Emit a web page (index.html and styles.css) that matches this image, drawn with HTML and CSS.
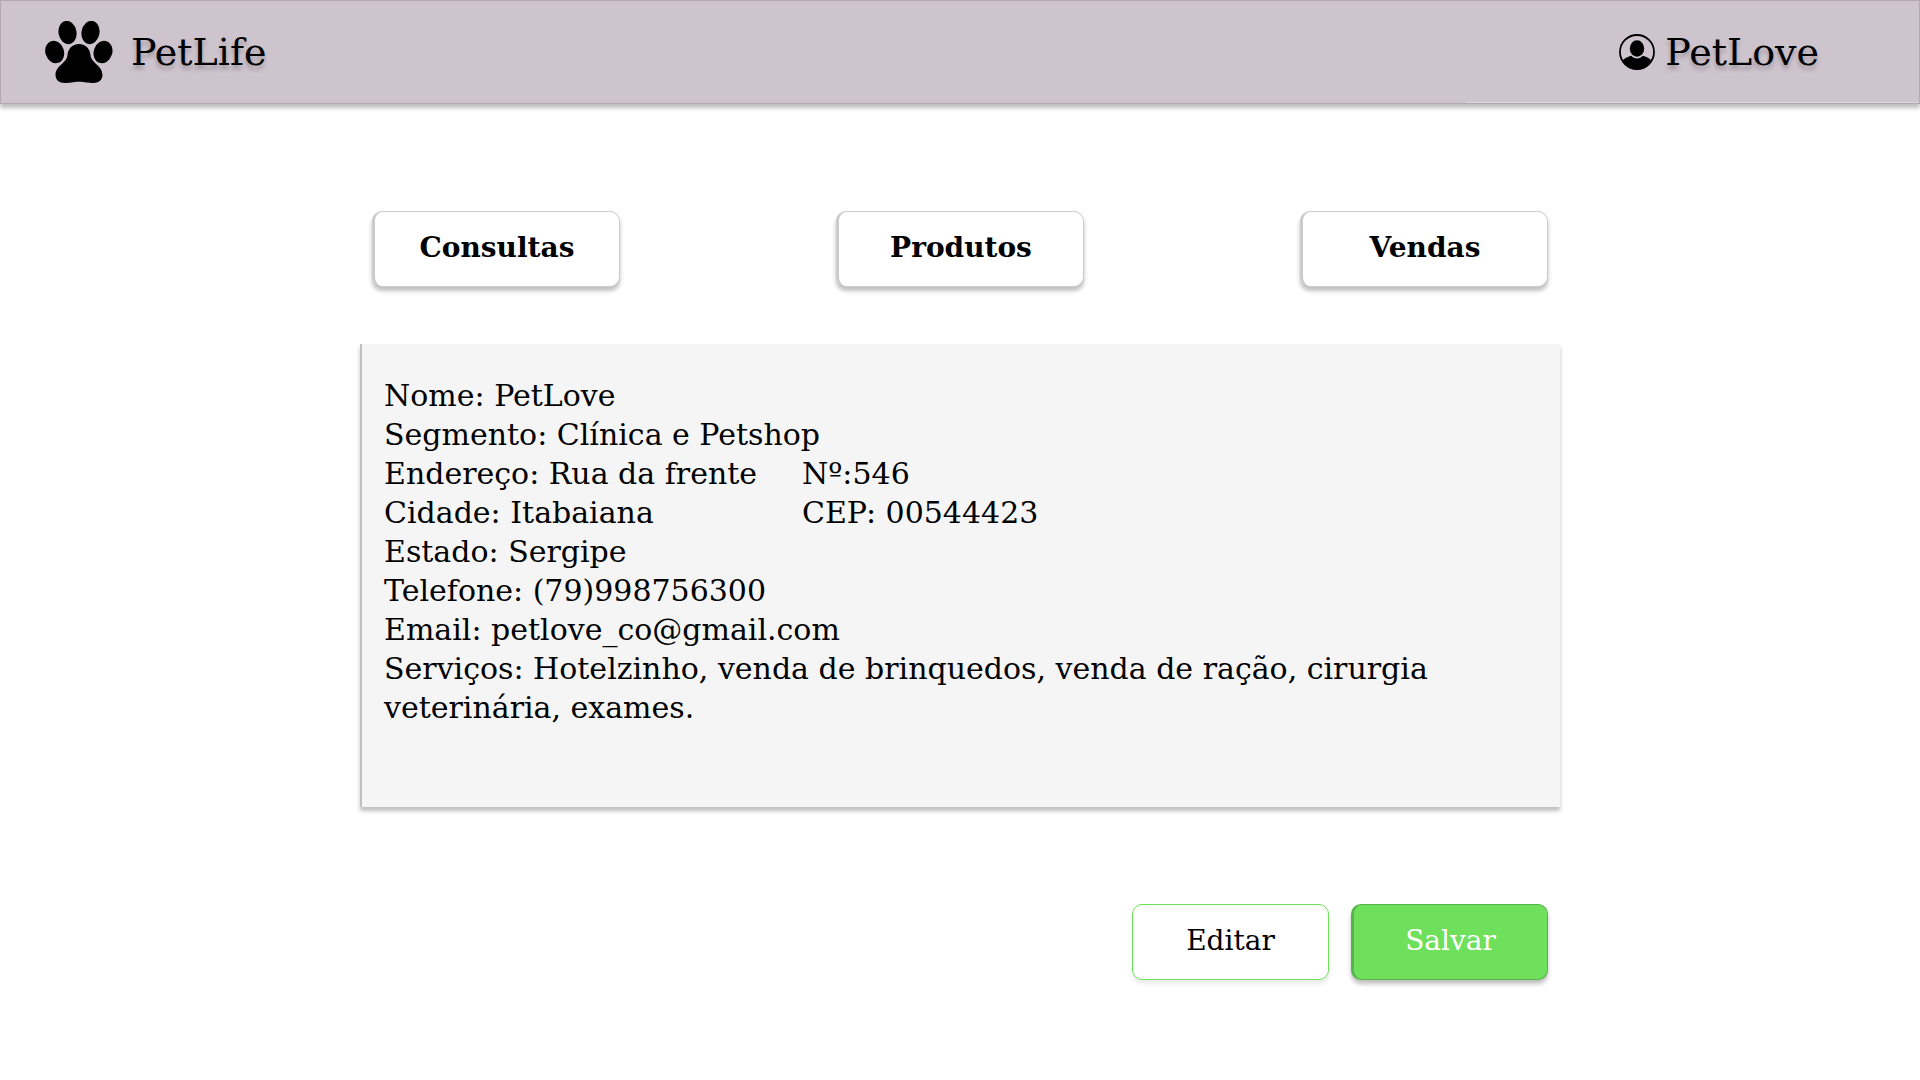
FILE: index.html
```html
<!DOCTYPE html>
<html lang="pt-BR">
<head>
<meta charset="utf-8">
<meta name="viewport" content="width=device-width, initial-scale=1">
<title>PetLife</title>
<link rel="stylesheet" href="styles.css">
</head>
<body>
<header class="topbar">
  <a class="brand" href="#">
    <svg class="brand-icon" viewBox="0 0 68 63" aria-hidden="true">
      <ellipse cx="22.5" cy="11.5" rx="9" ry="11.7" transform="rotate(-10 22.5 11.5)"/>
      <ellipse cx="45.5" cy="11.5" rx="9" ry="11.7" transform="rotate(10 45.5 11.5)"/>
      <ellipse cx="9.7" cy="31" rx="9.3" ry="11.4" transform="rotate(-18 9.7 31)"/>
      <ellipse cx="58" cy="31" rx="9.3" ry="11.4" transform="rotate(18 58 31)"/>
      <path d="M34 23C41 23 45 28 45.500 34C46 42 57.500 44.500 57.500 54C57.500 59 53.500 62 48.500 62C43 62 40 60.700 34 60.700S25 62 19.500 62C14.500 62 10.500 59 10.500 54C10.500 44.500 22 42 22.500 34C23 28 27 23 34 23Z"/>
    </svg>
    <span>PetLife</span>
  </a>
  <a class="account" href="#">
    <svg class="account-icon" viewBox="0 0 36 36" aria-hidden="true">
      <circle cx="18" cy="18" r="17" fill="none" stroke="#000" stroke-width="1.800"/>
      <ellipse cx="18" cy="14.500" rx="7.200" ry="8.300"/>
      <path d="M3.500 26.500C6 24 9 22.600 12.500 21.800C14.500 25.300 21.500 25.300 23.500 21.800C27 22.600 30 24 32.500 26.500C29 32.500 24 35.500 18 35.500S7 32.500 3.500 26.500Z"/>
    </svg>
    <span>PetLove</span>
  </a>
</header>
<main class="page">
  <nav class="tabs">
    <button class="btn btn-tab" type="button">Consultas</button>
    <button class="btn btn-tab" type="button">Produtos</button>
    <button class="btn btn-tab" type="button">Vendas</button>
  </nav>
  <section class="details">
    <p>Nome: PetLove</p>
    <p>Segmento: Clínica e Petshop</p>
    <p class="pair"><span>Endereço: Rua da frente</span><span>Nº:546</span></p>
    <p class="pair"><span>Cidade: Itabaiana</span><span>CEP: 00544423</span></p>
    <p>Estado: Sergipe</p>
    <p>Telefone: (79)998756300</p>
    <p>Email: petlove_co@gmail.com</p>
    <p>Serviços: Hotelzinho, venda de brinquedos, venda de ração, cirurgia veterinária, exames.</p>
  </section>
  <div class="actions">
    <button class="btn btn-edit" type="button">Editar</button>
    <button class="btn btn-save" type="button">Salvar</button>
  </div>
</main>
</body>
</html>
```
FILE: styles.css
```css
* {
  box-sizing: border-box;
}

body {
  margin: 0;
  background: #fff;
  color: #000;
  font-family: "DejaVu Serif", serif;
  font-size: 30px;
  line-height: 39px;
}

.topbar {
  position: relative;
  display: flex;
  align-items: center;
  justify-content: space-between;
  height: 104px;
  padding: 0 100px 0 44px;
  border: 1px solid #b3a7b2;
  background: #cec4ce;
  box-shadow: 0 4px 4px rgba(0, 0, 0, 0.25);
}

/* light highlight along the right end of the lower edge */
.topbar::after {
  content: "";
  position: absolute;
  right: 0;
  bottom: 0;
  width: 452px;
  height: 1px;
  background: #ddd7dd;
}

.brand,
.account {
  display: flex;
  align-items: center;
  color: inherit;
  font-size: 38px;
  text-decoration: none;
  text-shadow: 0 4px 4px rgba(0, 0, 0, 0.25);
}

.brand {
  gap: 18px;
}

.account {
  gap: 10px;
}

.brand-icon {
  width: 68px;
  height: 63px;
}

.account-icon {
  width: 36px;
  height: 36px;
}

.page {
  max-width: 1200px;
  margin: 0 auto;
  padding: 107px 0 96px;
}

.tabs {
  display: flex;
  justify-content: space-between;
  gap: 24px;
  padding: 0 12px;
}

.btn {
  height: 76px;
  padding: 0 0 4px;
  border-radius: 10px;
  font-family: inherit;
  font-size: 28px;
  cursor: pointer;
}

.btn-tab {
  width: 248px;
  border: 1px solid #ccc;
  border-left-width: 3px;
  background: #fff;
  color: #000;
  font-weight: bold;
  box-shadow: 0 4px 4px rgba(0, 0, 0, 0.25);
}

.details {
  min-height: 463px;
  margin-top: 57px;
  padding: 32px 22px;
  border-left: 2px solid #c0c0c0;
  background: #f5f5f5;
  box-shadow: 0 4px 4px rgba(0, 0, 0, 0.25);
}

.details p {
  margin: 0;
}

.pair {
  display: grid;
  grid-template-columns: 418px 1fr;
}

.actions {
  display: flex;
  justify-content: flex-end;
  gap: 22px;
  margin-top: 97px;
  padding: 0 12px;
}

.btn-edit,
.btn-save {
  width: 197px;
}

.btn-edit {
  border: 1px solid #6ee05c;
  background: #fff;
  color: #000;
  box-shadow: 0 4px 4px rgba(0, 0, 0, 0.08);
}

.btn-save {
  border: 1px solid #57b34a;
  border-left-width: 3px;
  background: #6ee05c;
  color: #fff;
  box-shadow: 0 4px 4px rgba(0, 0, 0, 0.25);
}
```
